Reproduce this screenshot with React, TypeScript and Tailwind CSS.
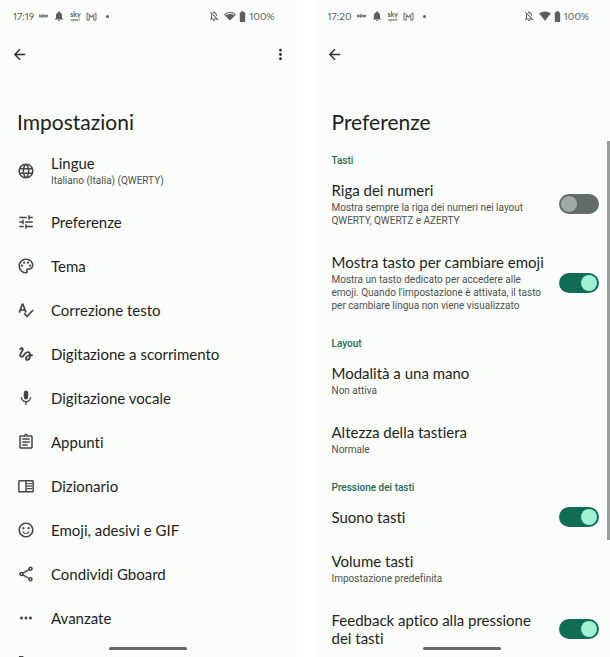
import { useState, type ReactNode } from 'react'
import type { IconType } from 'react-icons'
import {
    MdArrowBack,
    MdBatteryFull,
    MdGesture,
    MdLanguage,
    MdMic,
    MdMoreHoriz,
    MdMoreVert,
    MdNetworkWifi,
    MdNotifications,
    MdOutlineAssignment,
    MdOutlineNotificationsOff,
    MdOutlinePalette,
    MdOutlineSentimentSatisfiedAlt,
    MdOutlineShare,
    MdSignalWifi4Bar,
    MdTune,
} from 'react-icons/md'

type MenuItem = { icon: ReactNode; title: string; details?: string }

type Preference = { title: string; details?: string; toggle?: boolean; on?: boolean }

type Section = { name: string; items: Preference[] }

function SpellIcon() {
    return (
        <svg viewBox="0 0 24 24" className="size-[18px]" fill="none" stroke="currentColor" strokeWidth="2.2">
            <path d="M3 15.5L7 4.5h1l4 11M4.5 12h6" />
            <path d="M9.5 16.5l4 4 8-8.5" />
        </svg>
    )
}

function DictionaryIcon() {
    return (
        <svg viewBox="0 0 24 24" className="size-[18px]" fill="none" stroke="currentColor" strokeWidth="2">
            <rect x="2.5" y="5" width="19" height="14.5" rx="1" />
            <path d="M12 5v14.5" />
            <path d="M13 9h7M13 12.2h7M13 15.4h7" strokeWidth="1.6" />
        </svg>
    )
}

function GmailIcon() {
    return (
        <svg viewBox="0 0 24 20" className="h-[9px] w-[11px]" fill="none" stroke="currentColor" strokeWidth="2">
            <path d="M2 18V2l10 8 10-8v16h-5V8l-5 4-5-4v10z" />
        </svg>
    )
}

// wide app mark next to the clock
function NowIcon() {
    return (
        <svg viewBox="0 0 18 8" className="h-1 w-[9px]" fill="none" stroke="currentColor" strokeWidth="1.5">
            <path d="M1 7V1.5l3 5V1M6.5 1.5h3v5h-3zM11.5 1l1.5 5.5L14.5 2 16 6.5 17.5 1M0 4h17" />
        </svg>
    )
}

const menu: MenuItem[] = [
    { icon: <MdLanguage size={18} />, title: 'Lingue', details: 'Italiano (Italia) (QWERTY)' },
    { icon: <MdTune size={18} />, title: 'Preferenze' },
    { icon: <MdOutlinePalette size={18} />, title: 'Tema' },
    { icon: <SpellIcon />, title: 'Correzione testo' },
    { icon: <MdGesture size={18} />, title: 'Digitazione a scorrimento' },
    { icon: <MdMic size={18} />, title: 'Digitazione vocale' },
    { icon: <MdOutlineAssignment size={18} />, title: 'Appunti' },
    { icon: <DictionaryIcon />, title: 'Dizionario' },
    { icon: <MdOutlineSentimentSatisfiedAlt size={18} />, title: 'Emoji, adesivi e GIF' },
    { icon: <MdOutlineShare size={18} />, title: 'Condividi Gboard' },
    { icon: <MdMoreHoriz size={18} />, title: 'Avanzate' },
]

const sections: Section[] = [
    {
        name: 'Tasti',
        items: [
            {
                title: 'Riga dei numeri',
                details: 'Mostra sempre la riga dei numeri nei layout\nQWERTY, QWERTZ e AZERTY',
                toggle: true,
            },
            {
                title: 'Mostra tasto per cambiare emoji',
                details: "Mostra un tasto dedicato per accedere alle\nemoji. Quando l'impostazione è attivata, il tasto\nper cambiare lingua non viene visualizzato",
                toggle: true,
                on: true,
            },
        ],
    },
    {
        name: 'Layout',
        items: [
            { title: 'Modalità a una mano', details: 'Non attiva' },
            { title: 'Altezza della tastiera', details: 'Normale' },
        ],
    },
    {
        name: 'Pressione dei tasti',
        items: [
            { title: 'Suono tasti', toggle: true, on: true },
            { title: 'Volume tasti', details: 'Impostazione predefinita' },
            { title: 'Feedback aptico alla pressione\ndei tasti', toggle: true, on: true },
        ],
    },
]

function StatusBar({ time, wifi: Wifi }: { time: string; wifi: IconType }) {
    return (
        <div className="-ml-1 flex h-8 items-center justify-between pr-[10px] text-[10px] text-[#5b5f5d] proportional-nums">
            <div className="flex items-center gap-[5px]">
                <span>{time}</span>
                <NowIcon />
                <MdNotifications size={12} />
                <span className="flex flex-col items-center font-bold">
                    <span className="text-[7px] leading-[7px]">sky</span>
                    <span className="text-[4px] leading-[4px]">sport</span>
                </span>
                <GmailIcon />
                <span className="ml-1 size-[3px] rounded-full bg-current" />
            </div>
            <div className="flex items-center">
                <MdOutlineNotificationsOff size={12} />
                <Wifi size={12} className="ml-1" />
                <MdBatteryFull size={13} />
                <span>100%</span>
            </div>
        </div>
    )
}

function HomeBar() {
    return <div className="absolute bottom-[7px] left-1/2 h-[3px] w-[78px] -translate-x-1/2 rounded-full bg-[#666866]" />
}

function Label({ title, details }: { title: string; details?: string }) {
    return (
        <span className="flex flex-col gap-[2px] text-left whitespace-pre-line">
            <span className="text-[15px] leading-[18px] text-[#1c1f1d]">{title}</span>
            {details && <span className="font-['Roboto',sans-serif] text-[10px] leading-[13px] text-[#4c514e]">{details}</span>}
        </span>
    )
}

function PreferenceRow({ title, details, toggle, on = false }: Preference) {
    const [checked, setChecked] = useState(on)

    if (!toggle) {
        return (
            <button type="button" className="flex w-full py-[13px]">
                <Label title={title} details={details} />
            </button>
        )
    }

    return (
        <label className="flex items-center justify-between py-[13px]">
            <Label title={title} details={details} />
            <input
                type="checkbox"
                role="switch"
                checked={checked}
                onChange={() => setChecked(!checked)}
                className="-my-1 flex h-5 w-10 shrink-0 appearance-none items-center rounded-full bg-[#636d68] px-[2px] before:size-4 before:rounded-full before:bg-[#a0aaa5] checked:justify-end checked:bg-[#126b55] checked:before:bg-[#9ff2d5]"
            />
        </label>
    )
}

function App() {
    return (
        <main className="grid h-screen grid-cols-2 gap-[19px] overflow-hidden bg-white font-['Lato',sans-serif] [font-variant-ligatures:none]">
            <section className="relative overflow-hidden bg-[#fbfdfa] pr-[11px] pl-[17px]">
                <StatusBar time="17:19" wifi={MdNetworkWifi} />
                <div className="-mr-1 -ml-[6px] flex h-11 items-center justify-between text-[#2b2f2d]">
                    <button type="button" aria-label="Indietro"><MdArrowBack size={17} /></button>
                    <button type="button" aria-label="Altro"><MdMoreVert size={17} /></button>
                </div>
                <h1 className="mt-[33px] mb-[6px] text-[21px] leading-[26px] text-[#1c1f1d]">Impostazioni</h1>
                <nav>
                    {
                        menu.map(({ icon, title, details }) => (
                            <a key={title} href="#" className="flex items-center gap-4 py-[13px]">
                                <span className="text-[#404642]">{icon}</span>
                                <Label title={title} details={details} />
                            </a>
                        ))
                    }
                    {/* next entry, only its top edge is on screen */}
                    <div className="py-[13px] text-[#404642]">
                        <svg viewBox="0 0 24 24" className="size-[18px]" fill="none" stroke="currentColor" strokeWidth="2">
                            <path d="M3.5 5h4v15h-4z" />
                        </svg>
                    </div>
                </nav>
                <HomeBar />
            </section>

            <section className="relative overflow-hidden bg-[#fbfdfa] pr-[11px] pl-[17px]">
                <StatusBar time="17:20" wifi={MdSignalWifi4Bar} />
                <div className="-ml-[6px] flex h-11 items-center text-[#2b2f2d]">
                    <button type="button" aria-label="Indietro"><MdArrowBack size={17} /></button>
                </div>
                <h1 className="mt-[33px] mb-[7px] text-[21px] leading-[26px] text-[#1c1f1d]">Preferenze</h1>
                {
                    sections.map(({ name, items }) => (
                        <div key={name}>
                            <h2 className="flex h-[26px] items-end font-['Roboto',sans-serif] text-[10px] leading-[14px] font-medium text-[#1f6b56]">{name}</h2>
                            {items.map((item) => <PreferenceRow key={item.title} {...item} />)}
                        </div>
                    ))
                }
                {/* scroll thumb */}
                <div className="absolute top-[141px] right-0 h-[399px] w-[3px] bg-[#989d9a]" />
                <HomeBar />
            </section>
        </main>
    )
}

export default App
